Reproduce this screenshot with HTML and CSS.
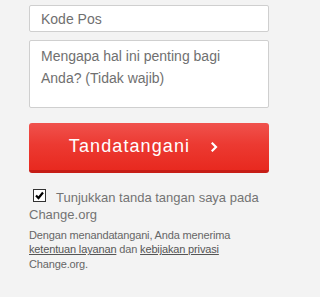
FILE: index.html
```html
<!DOCTYPE html>
<html lang="id">
<head>
<meta charset="utf-8">
<title>Tandatangani</title>
<link rel="stylesheet" href="styles.css">
</head>
<body>
<form class="sign-form">
  <input class="field" type="text" placeholder="Kode Pos">
  <textarea class="field field-area" placeholder="Mengapa hal ini penting bagi Anda? (Tidak wajib)"></textarea>
  <button class="sign-btn" type="button">
    <span class="sign-label">Tandatangani</span>
    <svg class="chev" width="7" height="10" viewBox="0 0 7 10"><polyline points="1.5,1.5 5,5 1.5,8.5" fill="none" stroke="#fff" stroke-width="2.2" stroke-linecap="square"/></svg>
  </button>
  <label class="show-sig"><span class="box"><svg width="11" height="11" viewBox="0 0 11 11"><polyline points="2,5.5 4.5,8 9,2.5" fill="none" stroke="#000" stroke-width="2.2"/></svg></span>Tunjukkan tanda tangan saya pada Change.org</label>
  <p class="legal">Dengan menandatangani, Anda menerima <a href="#">ketentuan layanan</a> dan <a href="#">kebijakan privasi</a> Change.org.</p>
</form>
</body>
</html>
```

FILE: styles.css
```css
html, body {
  margin: 0;
  padding: 0;
  background: #f3f3f3;
}
body {
  font-family: "Liberation Sans", Arial, sans-serif;
}
.sign-form {
  width: 240px;
  margin-left: 29px;
  padding-top: 5px;
  display: flex;
  flex-direction: column;
}
.field {
  box-sizing: border-box;
  width: 240px;
  height: 27px;
  margin: 0;
  border: 1px solid #cfcfcf;
  border-radius: 2px;
  background: #fff;
  padding: 0 11px;
  font-family: "Liberation Sans", Arial, sans-serif;
  font-size: 14px;
  color: #333;
  outline: none;
}
.field::placeholder {
  color: #707070;
  opacity: 1;
}
.field-area {
  height: 68px;
  margin-top: 8px;
  padding: 4px 11px;
  line-height: 22px;
  resize: none;
  overflow: hidden;
}
.sign-btn {
  box-sizing: border-box;
  margin-top: 15px;
  height: 50px;
  width: 240px;
  border: 0;
  border-bottom: 3px solid #c61d16;
  border-radius: 3px;
  background: linear-gradient(#f0524d 0%, #ec3a32 45%, #e8291f 100%);
  color: #fff;
  display: flex;
  align-items: center;
  justify-content: center;
  padding: 0 11px 0 0;
  cursor: pointer;
  font-family: "Liberation Sans", Arial, sans-serif;
}
.sign-label {
  font-size: 18px;
  letter-spacing: 1.1px;
}
.chev {
  margin-left: 21px;
  display: block;
}
.show-sig {
  margin-top: 16px;
  font-size: 13px;
  line-height: 17px;
  color: #737373;
  display: block;
}
.box {
  display: inline-block;
  box-sizing: border-box;
  width: 13px;
  height: 13px;
  border: 1px solid #333;
  background: #fff;
  margin: 0 10px 0 4px;
  position: relative;
}
.box svg {
  position: absolute;
  left: 0;
  top: 0;
}
.legal {
  margin: 5px 0 0;
  font-size: 11px;
  letter-spacing: -0.15px;
  line-height: 14.4px;
  color: #666;
}
.legal a {
  color: #555;
  text-decoration: underline;
}
```
